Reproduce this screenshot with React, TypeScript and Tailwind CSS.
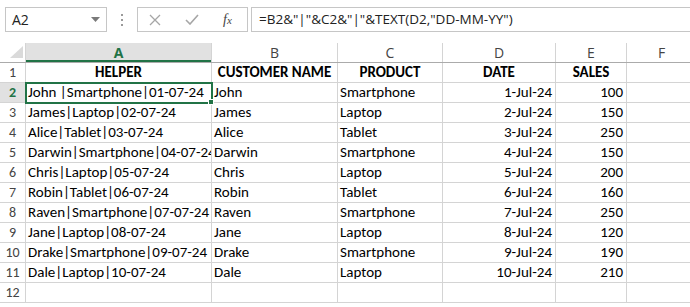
import React from 'react';

const rows = [
  ['John |Smartphone|01-07-24', 'John', 'Smartphone', '1-Jul-24', '100'],
  ['James|Laptop|02-07-24', 'James', 'Laptop', '2-Jul-24', '150'],
  ['Alice|Tablet|03-07-24', 'Alice', 'Tablet', '3-Jul-24', '250'],
  ['Darwin|Smartphone|04-07-24', 'Darwin', 'Smartphone', '4-Jul-24', '150'],
  ['Chris|Laptop|05-07-24', 'Chris', 'Laptop', '5-Jul-24', '200'],
  ['Robin|Tablet|06-07-24', 'Robin', 'Tablet', '6-Jul-24', '160'],
  ['Raven|Smartphone|07-07-24', 'Raven', 'Smartphone', '7-Jul-24', '250'],
  ['Jane|Laptop|08-07-24', 'Jane', 'Laptop', '8-Jul-24', '120'],
  ['Drake|Smartphone|09-07-24', 'Drake', 'Smartphone', '9-Jul-24', '190'],
  ['Dale|Laptop|10-07-24', 'Dale', 'Laptop', '10-Jul-24', '210'],
];

const cols = [
  { name: 'A', w: 'w-[186px]' },
  { name: 'B', w: 'w-[126px]' },
  { name: 'C', w: 'w-[105px]' },
  { name: 'D', w: 'w-[113px]' },
  { name: 'E', w: 'w-[71px]' },
  { name: 'F', w: 'w-[70px]' },
];

const cellFont = "font-['Calibri','Carlito','Lato',sans-serif] text-[15px] text-black";

function RowHead({ n, active }: { n: number; active?: boolean }) {
  return (
    <div
      className={
        'w-[26px] h-full shrink-0 flex items-center justify-center border-r border-[#d4d4d4] text-[14px] ' +
        (active ? 'bg-[#e1e1e1] text-[#217346] font-bold' : 'bg-white text-[#444]')
      }
    >
      {n}
    </div>
  );
}

function Cell({ w, children, align = 'left', bold }: { w: string; children?: React.ReactNode; align?: string; bold?: boolean }) {
  const a = align === 'right' ? 'justify-end pr-[3px]' : align === 'center' ? 'justify-center' : 'justify-start pl-[2px]';
  return (
    <div className={`${w} h-full shrink-0 flex items-center overflow-hidden whitespace-nowrap border-r border-[#d4d4d4] ${a} ${bold ? 'font-bold' : ''}`}>
      {children}
    </div>
  );
}

export default function App() {
  return (
    <div className="w-[690px] h-[307px] overflow-hidden bg-white relative font-['Open_Sans',sans-serif]">
      {/* formula bar */}
      <div className="h-[43px] flex items-start pt-[7px] pl-[5px]">
        <div className="w-[102px] h-[25px] border border-[#c6c6c6] flex items-center justify-between pl-[6px] pr-[6px] text-[14px] text-[#222]">
          <span>A2</span>
          <svg width="9" height="5" viewBox="0 0 9 5"><path d="M0 0h9L4.5 5z" fill="#7a7a7a" /></svg>
        </div>
        <div className="w-[30px] h-[25px] flex flex-col items-center justify-center gap-[3px]">
          <span className="w-[2px] h-[2px] bg-[#9a9a9a]" />
          <span className="w-[2px] h-[2px] bg-[#9a9a9a]" />
          <span className="w-[2px] h-[2px] bg-[#9a9a9a]" />
        </div>
        <div className="w-[111px] h-[25px] border border-[#c6c6c6] flex items-center">
          <svg className="ml-[11px]" width="12" height="12" viewBox="0 0 12 12">
            <path d="M1 1l10 10M11 1L1 11" stroke="#a6a6a6" strokeWidth="1.3" />
          </svg>
          <svg className="ml-[24px]" width="14" height="11" viewBox="0 0 14 11">
            <path d="M1 6l4 4 8-9" stroke="#a6a6a6" strokeWidth="1.6" fill="none" />
          </svg>
          <span className="ml-[24px] font-['Liberation_Serif',serif] italic text-[14px] text-[#444] leading-none">
            f<span className="text-[11px]">x</span>
          </span>
        </div>
        <div className="ml-[3px] flex-1 h-[25px] border border-r-0 border-[#c6c6c6] flex items-center pl-[7px] text-[13.5px] text-[#222] whitespace-nowrap">
          =B2&amp;"|"&amp;C2&amp;"|"&amp;TEXT(D2,"DD-MM-YY")
        </div>
      </div>

      {/* column headers */}
      <div className="h-[20px] flex border-b border-[#ababab]">
        <div className="w-[26px] h-full shrink-0 border-r border-[#d4d4d4] flex items-end justify-end pr-[2px] pb-[4px]">
          <svg width="13" height="12" viewBox="0 0 13 12"><path d="M13 0V12H0z" fill="#dadada" /></svg>
        </div>
        {cols.map((c, i) => (
          <div
            key={c.name}
            className={
              `${c.w} h-full shrink-0 flex items-center justify-center border-r border-[#d4d4d4] text-[14px] ` +
              (i === 0 ? 'bg-[#e1e1e1] text-[#217346] font-bold shadow-[inset_0_-2px_0_#217346]' : 'text-[#444]')
            }
          >
            {c.name}
          </div>
        ))}
      </div>

      {/* body */}
      <div className={cellFont}>
        <div className="h-[20px] flex border-b border-[#d4d4d4]">
          <RowHead n={1} />
          <Cell w={cols[0].w} align="center" bold>HELPER</Cell>
          <Cell w={cols[1].w} align="center" bold>CUSTOMER NAME</Cell>
          <Cell w={cols[2].w} align="center" bold>PRODUCT</Cell>
          <Cell w={cols[3].w} align="center" bold>DATE</Cell>
          <Cell w={cols[4].w} align="center" bold>SALES</Cell>
          <Cell w={cols[5].w} />
        </div>
        {rows.map((r, i) => (
          <div key={i} className="h-[20px] flex border-b border-[#d4d4d4]">
            <RowHead n={i + 2} active={i === 0} />
            <Cell w={cols[0].w}>{r[0]}</Cell>
            <Cell w={cols[1].w}>{r[1]}</Cell>
            <Cell w={cols[2].w}>{r[2]}</Cell>
            <Cell w={cols[3].w} align="right">{r[3]}</Cell>
            <Cell w={cols[4].w} align="right">{r[4]}</Cell>
            <Cell w={cols[5].w} />
          </div>
        ))}
        <div className="h-[20px] flex border-b border-[#d4d4d4]">
          <RowHead n={12} />
          {cols.map((c) => (
            <Cell key={c.name} w={c.w} />
          ))}
        </div>
      </div>

      {/* selection on A2 */}
      <div className="absolute left-[25px] top-[82px] w-[188px] h-[22px] border-2 border-[#217346] pointer-events-none" />
      <div className="absolute left-[208px] top-[99px] w-[6px] h-[6px] bg-[#217346] border border-white pointer-events-none" />
    </div>
  );
}
